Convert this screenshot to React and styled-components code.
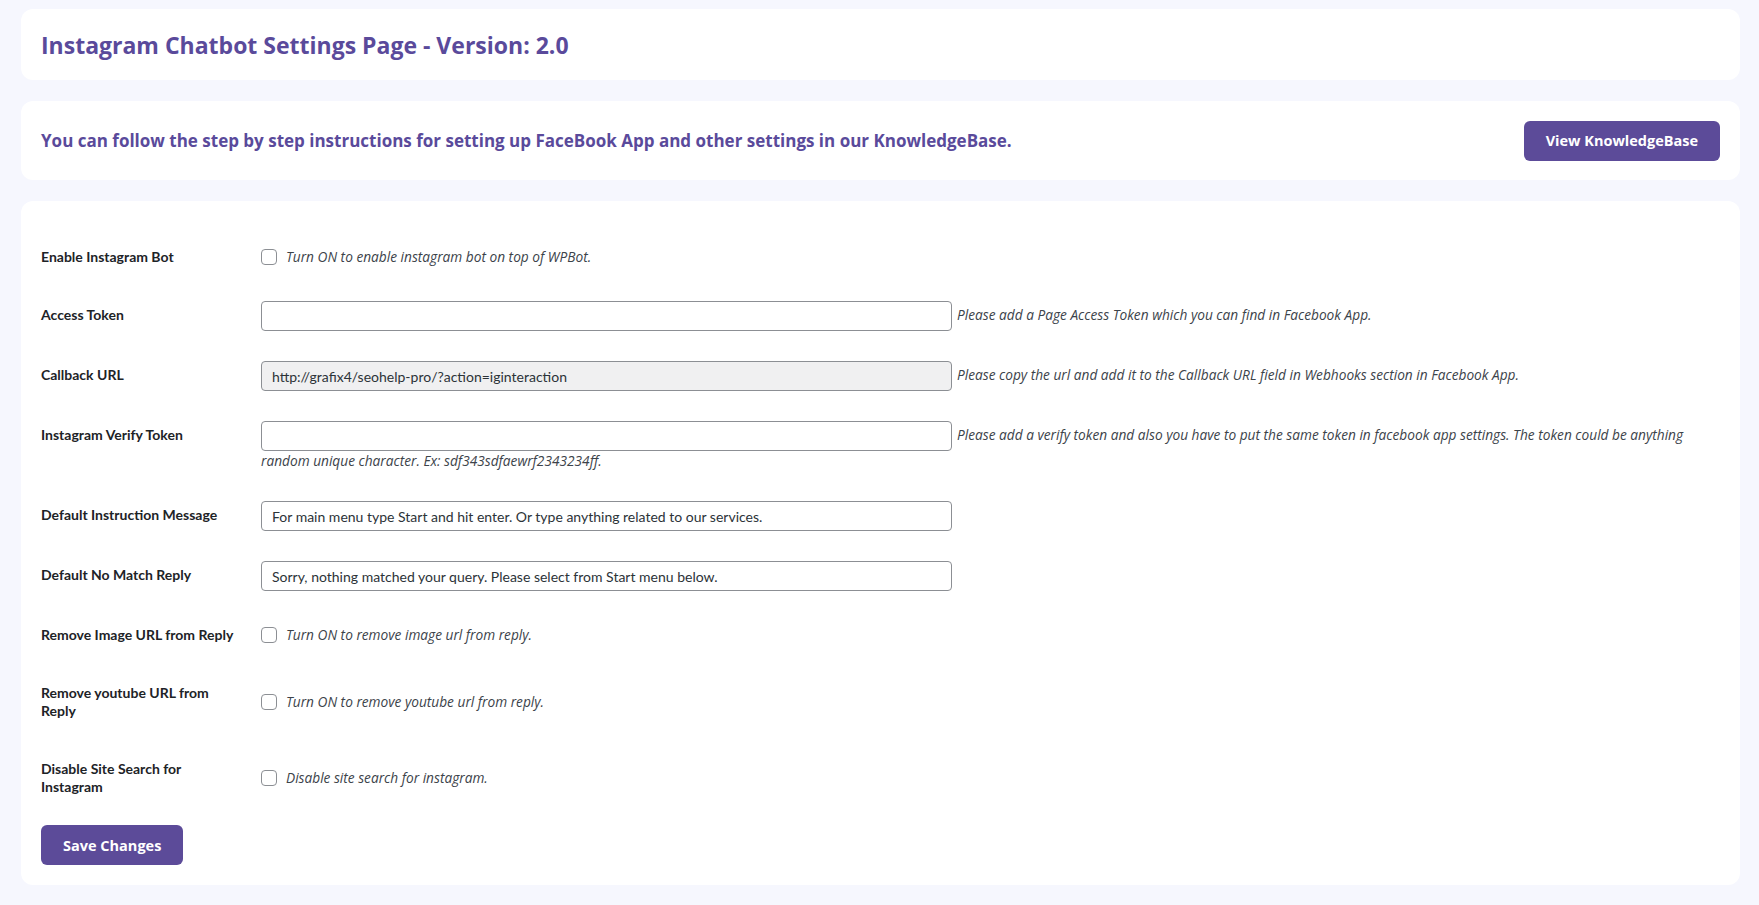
import React from "react";
import styled, { createGlobalStyle } from "styled-components";

const GlobalStyle = createGlobalStyle`
  html, body {
    margin: 0;
    padding: 0;
    background: #f6f7fe;
    font-family: Lato, "Noto Sans", sans-serif;
    color: #1d2327;
  }
  * { box-sizing: border-box; }
`;

const Page = styled.div`
  padding: 9px 19px 19px 21px;
  display: flex;
  flex-direction: column;
  gap: 21px;
`;

const Card = styled.div`
  background: #fff;
  border-radius: 12px;
  padding: ${p => p.pad || "0 20px"};
  min-height: ${p => p.h || "auto"};
  display: flex;
  align-items: ${p => (p.column ? "stretch" : "center")};
  flex-direction: ${p => (p.column ? "column" : "row")};
  justify-content: space-between;
`;

const Title = styled.h1`
  margin: 0;
  font-family: "Open Sans", sans-serif;
  font-size: 23px;
  font-weight: 700;
  color: #5a4a9b;
`;

const Notice = styled.p`
  margin: 0;
  font-family: "Open Sans", sans-serif;
  font-size: 17px;
  font-weight: 700;
  color: #5a4a9b;
`;

const Button = styled.button`
  background: #5c4b99;
  color: #fff;
  border: none;
  border-radius: 6px;
  height: 40px;
  padding: 0 22px;
  font-family: "Open Sans", sans-serif;
  font-size: 14.5px;
  font-weight: 700;
  cursor: pointer;
  align-self: ${p => p.align || "auto"};
  margin-top: ${p => p.mt || "0"};
`;

const Row = styled.div`
  display: grid;
  grid-template-columns: 220px 1fr;
`;

const Label = styled.div`
  align-self: start;
  padding: 20px 10px 20px 0;
  font-size: 14px;
  line-height: 18px;
  font-weight: 700;
  color: #1d2327;
  max-width: 206px;
`;

const Field = styled.div`
  align-self: center;
  padding: 15px 10px 15px 0;
  font-size: 14px;
  line-height: 20px;
  display: ${p => (p.flex ? "flex" : "block")};
  align-items: center;
`;

const Input = styled.input`
  width: 691px;
  height: 30px;
  border: 1px solid #8c8f94;
  border-radius: 4px;
  padding: 0 10px;
  font-family: Lato, sans-serif;
  font-size: 14px;
  color: #2c3338;
  background: ${p => (p.readOnly ? "#f0f0f1" : "#fff")};
  vertical-align: middle;
  margin-right: 5px;
  outline: none;
`;

const Check = styled.span`
  display: inline-block;
  width: 16px;
  height: 16px;
  border: 1px solid #8c8f94;
  border-radius: 4px;
  background: #fff;
  margin-right: 9px;
  flex-shrink: 0;
`;

const Desc = styled.span`
  font-family: "Open Sans", sans-serif;
  font-size: 13.7px;
  font-style: italic;
  color: #3c434a;
  line-height: 20px;
`;

const CheckRow = ({ label, desc }) => (
  <Row>
    <Label>{label}</Label>
    <Field flex>
      <Check />
      <Desc>{desc}</Desc>
    </Field>
  </Row>
);

const TextRow = ({ label, value, desc, readOnly }) => (
  <Row>
    <Label>{label}</Label>
    <Field>
      <Input defaultValue={value} readOnly={readOnly} />
      {desc && <Desc>{desc}</Desc>}
    </Field>
  </Row>
);

export default function App() {
  return (
    <>
      <GlobalStyle />
      <Page>
        <Card h="71px">
          <Title>Instagram Chatbot Settings Page - Version: 2.0</Title>
        </Card>
        <Card h="79px">
          <Notice>
            You can follow the step by step instructions for setting up FaceBook App and other
            settings in our KnowledgeBase.
          </Notice>
          <Button>View KnowledgeBase</Button>
        </Card>
        <Card column pad="27px 20px 20px 20px">
          <CheckRow label="Enable Instagram Bot" desc="Turn ON to enable instagram bot on top of WPBot." />
          <TextRow label="Access Token" value="" desc="Please add a Page Access Token which you can find in Facebook App." />
          <TextRow
            label="Callback URL"
            readOnly
            value="http://grafix4/seohelp-pro/?action=iginteraction"
            desc="Please copy the url and add it to the Callback URL field in Webhooks section in Facebook App."
          />
          <TextRow
            label="Instagram Verify Token"
            value=""
            desc="Please add a verify token and also you have to put the same token in facebook app settings. The token could be anything random unique character. Ex: sdf343sdfaewrf2343234ff."
          />
          <TextRow
            label="Default Instruction Message"
            value="For main menu type Start and hit enter. Or type anything related to our services."
          />
          <TextRow
            label="Default No Match Reply"
            value="Sorry, nothing matched your query. Please select from Start menu below."
          />
          <CheckRow label="Remove Image URL from Reply" desc="Turn ON to remove image url from reply." />
          <CheckRow label="Remove youtube URL from Reply" desc="Turn ON to remove youtube url from reply." />
          <CheckRow label="Disable Site Search for Instagram" desc="Disable site search for instagram." />
          <Button align="flex-start" mt="9px">
            Save Changes
          </Button>
        </Card>
      </Page>
    </>
  );
}
